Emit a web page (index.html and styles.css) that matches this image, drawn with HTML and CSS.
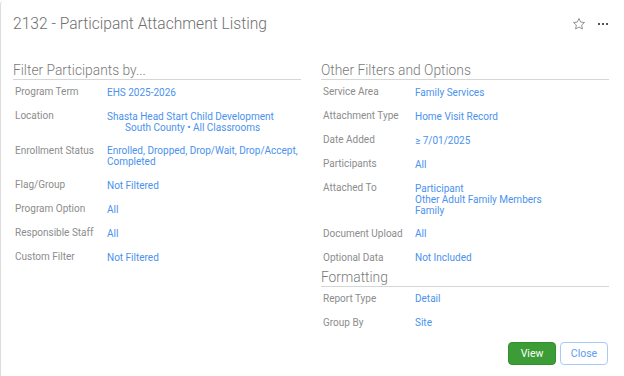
FILE: index.html
```html
<!DOCTYPE html>
<html lang="en">
<head>
  <meta charset="UTF-8" />
  <title>2132 - Participant Attachment Listing</title>
  <link rel="stylesheet" href="styles.css">
</head>
<body>
  <div class="modal">
    <div class="modal-header">
      <div class="modal-title">2132 - Participant Attachment Listing</div>
      <div class="header-tools">
        <svg class="star" width="14" height="14" viewBox="0 0 24 24">
          <path d="M12 2.5l2.9 6.2 6.6.7-5 4.5 1.4 6.6L12 17.2l-5.9 3.3 1.4-6.6-5-4.5 6.6-.7z" fill="none" stroke="#8a8a8a" stroke-width="1.6" stroke-linejoin="round"/>
        </svg>
        <div class="more"><span></span><span></span><span></span></div>
      </div>
    </div>

    <div class="modal-body">
      <div class="col">
        <div class="section-title">Filter Participants by...</div>
        <div class="row"><div class="label">Program Term</div><div class="value">EHS 2025-2026</div></div>
        <div class="row"><div class="label">Location</div><div class="value">Shasta Head Start Child Development<div class="indent">South County • All Classrooms</div></div></div>
        <div class="row"><div class="label">Enrollment Status</div><div class="value">Enrolled, Dropped, Drop/Wait, Drop/Accept, Completed</div></div>
        <div class="row"><div class="label">Flag/Group</div><div class="value">Not Filtered</div></div>
        <div class="row"><div class="label">Program Option</div><div class="value">All</div></div>
        <div class="row"><div class="label">Responsible Staff</div><div class="value">All</div></div>
        <div class="row"><div class="label">Custom Filter</div><div class="value">Not Filtered</div></div>
      </div>

      <div class="col">
        <div class="section-title">Other Filters and Options</div>
        <div class="row"><div class="label">Service Area</div><div class="value">Family Services</div></div>
        <div class="row"><div class="label">Attachment Type</div><div class="value">Home Visit Record</div></div>
        <div class="row"><div class="label">Date Added</div><div class="value">≥ 7/01/2025</div></div>
        <div class="row"><div class="label">Participants</div><div class="value">All</div></div>
        <div class="row"><div class="label">Attached To</div><div class="value">Participant<br>Other Adult Family Members<br>Family</div></div>
        <div class="row"><div class="label">Document Upload</div><div class="value">All</div></div>
        <div class="row"><div class="label">Optional Data</div><div class="value">Not Included</div></div>

        <div class="section-title section-sub">Formatting</div>
        <div class="row"><div class="label">Report Type</div><div class="value">Detail</div></div>
        <div class="row"><div class="label">Group By</div><div class="value">Site</div></div>

        <div class="actions">
          <button class="btn btn-view">View</button>
          <button class="btn btn-close">Close</button>
        </div>
      </div>
    </div>
  </div>
</body>
</html>
```

FILE: styles.css
```css
* {
  box-sizing: border-box;
}

body {
  margin: 0;
  background: #fff;
  font-family: Roboto, "Liberation Sans", sans-serif;
}

.modal {
  height: 376px;
  margin-top: 1px;
  border-left: 1px solid #dcdcdc;
  border-top-left-radius: 4px;
  background: #fff;
}

.modal-header {
  display: flex;
  align-items: center;
  justify-content: space-between;
  height: 44px;
  padding: 1px 16px 0 12px;
}

.modal-title {
  font-size: 15.6px;
  font-weight: 300;
  color: #6f6f6f;
}

.header-tools {
  display: flex;
  align-items: center;
  gap: 12px;
}

.more {
  display: flex;
  gap: 2px;
}

.more span {
  width: 2px;
  height: 2px;
  background: #555;
}

.modal-body {
  display: grid;
  grid-template-columns: 288px 288px;
  column-gap: 20px;
  padding: 17px 0 0 12px;
}

.section-title {
  font-size: 13.8px;
  font-weight: 300;
  color: #7a7a7a;
  line-height: 16px;
  padding-bottom: 1px;
  border-bottom: 1px solid #d6d6d6;
}

.section-sub {
  margin-top: -1px;
}

.row {
  display: flex;
  padding: 6px 0 6px 2px;
  font-size: 10px;
}

.label {
  width: 92px;
  flex-shrink: 0;
  color: #8c8c8c;
  line-height: 12px;
}

.value {
  color: #4a92ee;
  line-height: 11px;
  padding-top: 0.5px;
}

.indent {
  padding-left: 18px;
}

.actions {
  display: flex;
  justify-content: flex-end;
  gap: 4px;
  margin: 7px 1px 0 0;
}

.btn {
  width: 48px;
  height: 23px;
  border-radius: 4px;
  font-family: Roboto, "Liberation Sans", sans-serif;
  font-size: 10.5px;
  cursor: pointer;
}

.btn-view {
  background: #3c9c35;
  border: 1px solid #34902e;
  color: #fff;
}

.btn-close {
  background: #fff;
  border: 1px solid #a8cbf5;
  color: #5c9cef;
}
```
